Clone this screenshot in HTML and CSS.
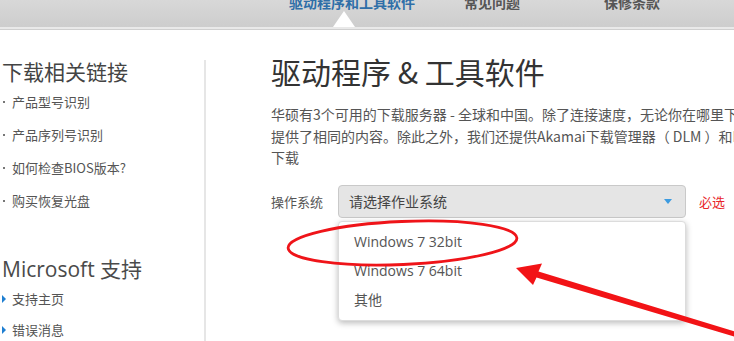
FILE: index.html
```html
<!DOCTYPE html>
<html lang="zh">
<head>
<meta charset="utf-8">
<link rel="stylesheet" href="styles.css">
</head>
<body>
<div class="nav">
  <div class="nav-item active">驱动程序和工具软件<span class="caret"></span></div>
  <div class="nav-item">常见问题</div>
  <div class="nav-item">保修条款</div>
</div>
<div class="page">
  <aside class="side">
    <h2 class="side-title">下载相关链接</h2>
    <ul class="links">
      <li>产品型号识别</li>
      <li>产品序列号识别</li>
      <li>如何检查BIOS版本?</li>
      <li>购买恢复光盘</li>
    </ul>
    <div class="side-rule"></div>
    <h2 class="side-title ms">Microsoft 支持</h2>
    <ul class="links arrows">
      <li>支持主页</li>
      <li>错误消息</li>
    </ul>
  </aside>
  <main class="main">
    <h1 class="title">驱动程序 &amp; 工具软件</h1>
    <p class="intro">
      <span class="line">华硕有3个可用的下载服务器 - 全球和中国。除了连接速度，无论你在哪里下载，所有服务器都</span>
      <span class="line">提供了相同的内容。除此之外，我们还提供Akamai下载管理器（ DLM ）和BT下载方式</span>
      <span class="line">下载</span>
    </p>
    <div class="os-row">
      <span class="os-label">操作系统</span>
      <div class="select-wrap">
        <div class="select">
          <span>请选择作业系统</span>
          <span class="arrow"></span>
        </div>
        <ul class="menu">
          <li>Windows 7 32bit</li>
          <li>Windows 7 64bit</li>
          <li>其他</li>
        </ul>
      </div>
      <span class="required">必选</span>
    </div>
  </main>
</div>
<svg class="marks" width="734" height="341" viewBox="0 0 734 341">
  <ellipse cx="402.5" cy="243" rx="114.5" ry="21.5" transform="rotate(-2.5 402.5 243)" fill="none" stroke="#ef1419" stroke-width="2.8"/>
  <polygon points="516,268 542,263.5 538.5,271.5 740,333 739,338 536.5,277.5 533,285" fill="#f21316"/>
</svg>
</body>
</html>
```
FILE: styles.css
```css
* { box-sizing: border-box; }
html, body { margin: 0; padding: 0; }
body {
  width: 734px;
  height: 341px;
  overflow: hidden;
  position: relative;
  background: #fff;
  font-family: "Noto Sans CJK SC", "Noto Sans", sans-serif;
  color: #555;
}
.nav {
  height: 29px;
  display: flex;
  padding-left: 282px;
  background: linear-gradient(#d8d8d8, #cdcdcd);
  border-bottom: 2px solid #e9e9e9;
  box-shadow: 0 1px 0 #cfcfcf;
  overflow: hidden;
}
.nav-item {
  position: relative;
  width: 140px;
  text-align: center;
  font-size: 14px;
  line-height: 16px;
  margin-top: -6px;
  font-weight: 700;
  color: #555;
}
.nav-item.active { color: #2f6fa8; }
.caret {
  position: absolute;
  left: 51px;
  top: 17px;
  width: 0;
  height: 0;
  border-left: 11px solid transparent;
  border-right: 11px solid transparent;
  border-bottom: 16px solid #fff;
}
.page {
  display: flex;
  height: 312px;
}
.side {
  width: 206px;
  padding-top: 29px;
  display: flex;
  flex-direction: column;
  border-right: 2px solid #e6e6e6;
  border-image: linear-gradient(to bottom, transparent 0, transparent 32px, #e6e6e6 32px) 1;
}
.side-title {
  margin: 0 0 0 2px;
  font-size: 21px;
  line-height: 26px;
  font-weight: 400;
  color: #444;
}
.side-title.ms {
  margin-top: 21px;
  font-family: "Open Sans", "Noto Sans CJK SC", sans-serif;
  font-size: 21px;
  color: #4a4a4a;
}
.links {
  list-style: none;
  margin: 1px 0 0 0;
  padding: 0;
}
.links li {
  position: relative;
  height: 33px;
  line-height: 33px;
  padding-left: 12px;
  font-size: 13px;
  color: #555;
}
.links li::before {
  content: "";
  position: absolute;
  left: 3px;
  top: 16px;
  width: 2px;
  height: 2px;
  background: #777;
}
.links.arrows li { height: 31px; line-height: 31px; }
.links.arrows li::before {
  left: 2px;
  top: 12px;
  width: 0;
  height: 0;
  background: none;
  border-top: 4px solid transparent;
  border-bottom: 4px solid transparent;
  border-left: 4px solid #1f7fd1;
}
.side-rule {
  margin-top: 18px;
  width: 169px;
  height: 1px;
  background: #d9d9d9;
}
.main {
  flex: 1;
  padding-left: 65px;
  padding-top: 22px;
  min-width: 0;
}
.title {
  margin: 0;
  font-size: 30px;
  line-height: 40px;
  font-weight: 400;
  color: #333;
  white-space: nowrap;
}
.intro {
  margin: 13px 0 0 0;
  font-size: 14px;
  line-height: 21.5px;
  color: #555;
}
.intro .line { display: block; white-space: nowrap; }
.os-row {
  margin-top: 16px;
  display: flex;
  align-items: center;
}
.os-label {
  width: 67px;
  font-size: 13px;
  color: #555;
}
.select-wrap { position: relative; }
.select {
  width: 348px;
  height: 33px;
  display: flex;
  align-items: center;
  justify-content: space-between;
  padding: 0 13px 0 10px;
  background: #e5e5e5;
  border: 1px solid #c9c9c9;
  border-radius: 4px;
  font-size: 14px;
  color: #444;
}
.arrow {
  width: 0;
  height: 0;
  border-left: 4px solid transparent;
  border-right: 4px solid transparent;
  border-top: 5px solid #3c9be0;
}
.required {
  margin-left: 13px;
  font-size: 13px;
  color: #e8252a;
}
.menu {
  position: absolute;
  left: 0;
  top: 36px;
  width: 348px;
  margin: 0;
  padding: 5px 0 6px 0;
  list-style: none;
  background: #fff;
  border: 1px solid #dcdcdc;
  border-radius: 4px;
  box-shadow: 0 2px 6px rgba(0,0,0,0.28);
}
.menu li {
  height: 29px;
  line-height: 29px;
  padding-left: 15px;
  font-family: "Open Sans", "Noto Sans CJK SC", sans-serif;
  font-size: 14px;
  color: #555;
}
.marks {
  position: absolute;
  left: 0;
  top: 0;
  pointer-events: none;
}
```
